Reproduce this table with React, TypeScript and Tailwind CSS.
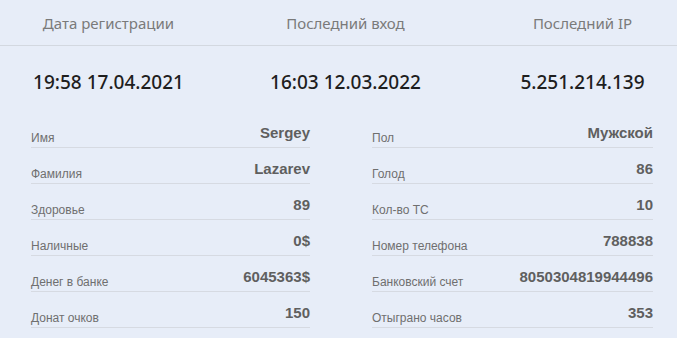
import React from "react";

const left: [string, string][] = [
  ["Имя", "Sergey"],
  ["Фамилия", "Lazarev"],
  ["Здоровье", "89"],
  ["Наличные", "0$"],
  ["Денег в банке", "6045363$"],
  ["Донат очков", "150"],
];
const right: [string, string][] = [
  ["Пол", "Мужской"],
  ["Голод", "86"],
  ["Кол-во ТС", "10"],
  ["Номер телефона", "788838"],
  ["Банковский счет", "8050304819944496"],
  ["Отыграно часов", "353"],
];

const stats: [string, string][] = [
  ["Дата регистрации", "19:58 17.04.2021"],
  ["Последний вход", "16:03 12.03.2022"],
  ["Последний IP", "5.251.214.139"],
];

function Row({ label, value }: { label: string; value: string }) {
  return (
    <div className="flex h-[36px] items-end justify-between border-b border-[#d6dae2] pb-[2px]">
      <span className="text-[12px] leading-[14px] text-[#6f6f6f]">{label}</span>
      <span className="text-[15px] font-bold leading-[17px] text-[#5f5f5f] mb-[4px]">{value}</span>
    </div>
  );
}

export default function App() {
  return (
    <div className="w-[677px] h-[338px] overflow-hidden bg-[#e7edf8]" style={{ fontFamily: '"Liberation Sans", Arial, sans-serif' }}>
      <div className="flex h-[46px] items-center border-b border-[#d3d8e0] text-[15px] text-[#7a7a7a]" style={{ fontFamily: '"Noto Sans", sans-serif' }}>
        <div className="-ml-[10px] flex">
          {stats.map(([h]) => (
            <div key={h} className="w-[237px] flex-none text-center pt-[1px]">{h}</div>
          ))}
        </div>
      </div>
      <div className="flex h-[72px] items-center text-[19px] font-medium text-[#1e1e1e]" style={{ fontFamily: '"Noto Sans", sans-serif' }}>
        <div className="-ml-[10px] flex">
          {stats.map(([h, v]) => (
            <div key={h} className="w-[237px] flex-none text-center">{v}</div>
          ))}
        </div>
      </div>
      <div className="flex pl-[31px] -mt-[6px]">
        <div className="w-[279px]">
          {left.map(([l, v]) => (
            <Row key={l} label={l} value={v} />
          ))}
        </div>
        <div className="ml-[62px] w-[281px]">
          {right.map(([l, v]) => (
            <Row key={l} label={l} value={v} />
          ))}
        </div>
      </div>
    </div>
  );
}
